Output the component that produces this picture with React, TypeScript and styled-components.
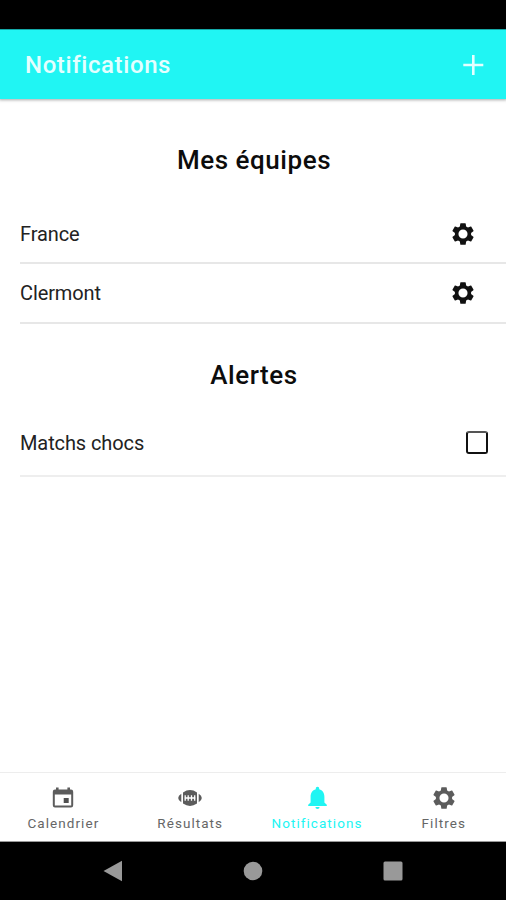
import React from "react";
import styled, { createGlobalStyle } from "styled-components";

const GlobalStyle = createGlobalStyle`
  * { box-sizing: border-box; }
  body { margin: 0; background: #fff; font-family: Roboto, "Liberation Sans", sans-serif; }
`;

const Screen = styled.div`
  width: 506px;
  height: 900px;
  display: flex;
  flex-direction: column;
  background: #fff;
  overflow: hidden;
`;

const StatusBar = styled.div`
  height: 29px;
  flex: none;
  background: #000;
`;

const Toolbar = styled.header`
  height: 70px;
  flex: none;
  display: flex;
  align-items: center;
  justify-content: space-between;
  padding: 1px 20px 0 25px;
  background: #20f5f3;
  border-top: 1px solid #14a9a8;
  box-shadow: 0 0 3px 1px rgba(0, 0, 0, 0.35);
`;

const Title = styled.h1`
  margin: 0;
  font-size: 24px;
  line-height: 30px;
  font-weight: 550;
  letter-spacing: 0.6px;
  color: #e4ffff;
`;

const IconButton = styled.button`
  display: flex;
  padding: 0;
  border: 0;
  background: none;
  color: inherit;
`;

const Content = styled.main`
  flex: 1;
  display: flex;
  flex-direction: column;
`;

const Heading = styled.h2<{ $height: number; $top: number }>`
  margin: 0;
  height: ${(p) => p.$height}px;
  padding-top: ${(p) => p.$top}px;
  padding-left: 2px;
  text-align: center;
  font-size: 26px;
  line-height: 32px;
  font-weight: 460;
  letter-spacing: 0.55px;
  color: #0c0c0c;
`;

const Row = styled.div<{ $height: number; $right: number; $line: string }>`
  height: ${(p) => p.$height}px;
  margin-left: 20px;
  padding-right: ${(p) => p.$right}px;
  display: flex;
  align-items: center;
  justify-content: space-between;
  border-bottom: 2px solid ${(p) => p.$line};
`;

const RowLabel = styled.span`
  font-size: 20px;
  line-height: 24px;
  font-weight: 370;
  letter-spacing: -0.1px;
  color: #222;
`;

const Checkbox = styled.span`
  width: 22px;
  height: 23px;
  border: 2px solid #111;
  border-top-color: #555;
  border-radius: 3px;
`;

const TabBar = styled.nav`
  height: 70px;
  flex: none;
  display: grid;
  grid-template-columns: repeat(4, 126.8px);
  border-top: 1px solid #ededed;
  border-bottom: 1px solid #999;
`;

const Tab = styled.a<{ $active?: boolean }>`
  display: flex;
  flex-direction: column;
  align-items: center;
  padding-top: 12px;
  font-size: 13.5px;
  line-height: 18px;
  font-weight: 400;
  letter-spacing: 1.05px;
  color: ${(p) => (p.$active ? "#20f5f3" : "#666")};
  svg { flex: none; margin-bottom: 3px; }
`;

const SystemBar = styled.footer`
  height: 58px;
  flex: none;
  display: flex;
  justify-content: center;
  align-items: center;
  gap: 120px;
  background: #000;
`;

const Gear = ({ size, color, hole = 4.2 }: { size: number; color: string; hole?: number }) => (
  <svg width={size} height={size} viewBox="0 0 24 24" fill={color}>
    <path
      fillRule="evenodd"
      d={`M19.43 12.98c.04-.32.07-.64.07-.98s-.03-.66-.07-.98l2.11-1.65c.19-.15.24-.42.12-.64l-2-3.46c-.12-.22-.39-.3-.61-.22l-2.49 1c-.52-.4-1.08-.73-1.69-.98l-.38-2.65C14.46 2.18 14.25 2 14 2h-4c-.25 0-.46.18-.49.42l-.38 2.65c-.61.25-1.17.59-1.69.98l-2.49-1c-.23-.09-.49 0-.61.22l-2 3.46c-.13.22-.07.49.12.64l2.11 1.65c-.04.32-.07.65-.07.98s.03.66.07.98l-2.11 1.65c-.19.15-.24.42-.12.64l2 3.46c.12.22.39.3.61.22l2.49-1c.52.4 1.08.73 1.69.98l.38 2.65c.03.24.24.42.49.42h4c.25 0 .46-.18.49-.42l.38-2.65c.61-.25 1.17-.59 1.69-.98l2.49 1c.23.09.49 0 .61-.22l2-3.46c.12-.22.07-.49-.12-.64l-2.11-1.65zM${12 - hole} 12a${hole} ${hole} 0 1 0 ${hole * 2} 0a${hole} ${hole} 0 1 0 ${-hole * 2} 0z`}
    />
  </svg>
);

const Plus = () => (
  <svg width="26" height="26" viewBox="0 0 26 26" stroke="#e4ffff" strokeWidth="2.6">
    <path d="M13.3 3v20M3.3 13h20" />
  </svg>
);

const CalendarIcon = () => (
  <svg width="24" height="26" viewBox="0 0 24 26">
    <path d="M5 2.5h2.6v2h8.8v-2H19v2h1a2.2 2.2 0 0 1 2.2 2.2v13.6a2.2 2.2 0 0 1-2.2 2.2H4a2.2 2.2 0 0 1-2.2-2.2V6.7A2.2 2.2 0 0 1 4 4.5h1z" fill="#5c5c5c" />
    <path d="M3.8 9.5h16.4v11H3.8z" fill="#fff" />
    <path d="M12.7 13h5v5h-5z" fill="#505050" />
  </svg>
);

const BallIcon = () => (
  <svg width="26" height="26" viewBox="0 0 26 26">
    <path d="M6 7.4Q13 2.8 20 7.4v11.2Q13 23.2 6 18.6z" fill="#5c5c5c" />
    <path d="M4.3 8.8v8.4Q1.2 15.4 1.2 13t3.1-4.2zM21.7 8.8v8.4Q24.8 15.4 24.8 13t-3.1-4.2z" fill="#5c5c5c" />
    <path d="M7.5 13h11M8.2 10.2v5.6M11.2 10.2v5.6M14.5 10.2v5.6M17.7 10.2v5.6" stroke="#fff" strokeWidth="1.3" />
  </svg>
);

const BellIcon = () => (
  <svg width="24" height="26" viewBox="0 0 24 26" fill="#20f5f3">
    <path d="M12.5 1.8c-1.1 0-1.7.8-1.7 1.8v.7C7.4 5.200 5.600 8.200 5.600 11.800v5.700l-2.400 2.300V21h18.600v-1.200l-2.400-2.300v-5.700c0-3.600-1.800-6.600-5.200-7.500v-.7c0-1-.6-1.800-1.700-1.800zM10.400 22.100a2.100 2 0 0 0 4.200 0z" />
  </svg>
);

const SystemKeys = () => (
  <>
    <svg width="20" height="22" viewBox="0 0 20 22" fill="#999"><path d="M19 .8v20.400L.5 11z" /></svg>
    <svg width="20" height="20" viewBox="0 0 20 20" fill="#999"><circle cx="10" cy="10" r="9.300" /></svg>
    <svg width="20" height="20" viewBox="0 0 20 20" fill="#999"><rect x=".5" y=".5" width="19" height="19" rx="1.500" /></svg>
  </>
);

export default function App() {
  return (
    <>
      <GlobalStyle />
      <Screen>
        <StatusBar />
        <Toolbar>
          <Title>Notifications</Title>
          <IconButton aria-label="Ajouter"><Plus /></IconButton>
        </Toolbar>
        <Content>
          <Heading $height={106} $top={45}>Mes équipes</Heading>
          <Row $height={59} $right={30} $line="#e7e7e7">
            <RowLabel>France</RowLabel>
            <IconButton aria-label="Paramètres France"><Gear size={26} color="#111" /></IconButton>
          </Row>
          <Row $height={60} $right={30} $line="#e7e7e7">
            <RowLabel>Clermont</RowLabel>
            <IconButton aria-label="Paramètres Clermont"><Gear size={26} color="#111" /></IconButton>
          </Row>
          <Heading $height={86} $top={35}>Alertes</Heading>
          <Row $height={67} $right={18} $line="#eeeeee">
            <RowLabel>Matchs chocs</RowLabel>
            <Checkbox role="checkbox" aria-checked={false} aria-label="Matchs chocs" />
          </Row>
        </Content>
        <TabBar>
          <Tab><CalendarIcon />Calendrier</Tab>
          <Tab><BallIcon />Résultats</Tab>
          <Tab $active><BellIcon />Notifications</Tab>
          <Tab><Gear size={26} color="#5c5c5c" />Filtres</Tab>
        </TabBar>
        <SystemBar><SystemKeys /></SystemBar>
      </Screen>
    </>
  );
}
